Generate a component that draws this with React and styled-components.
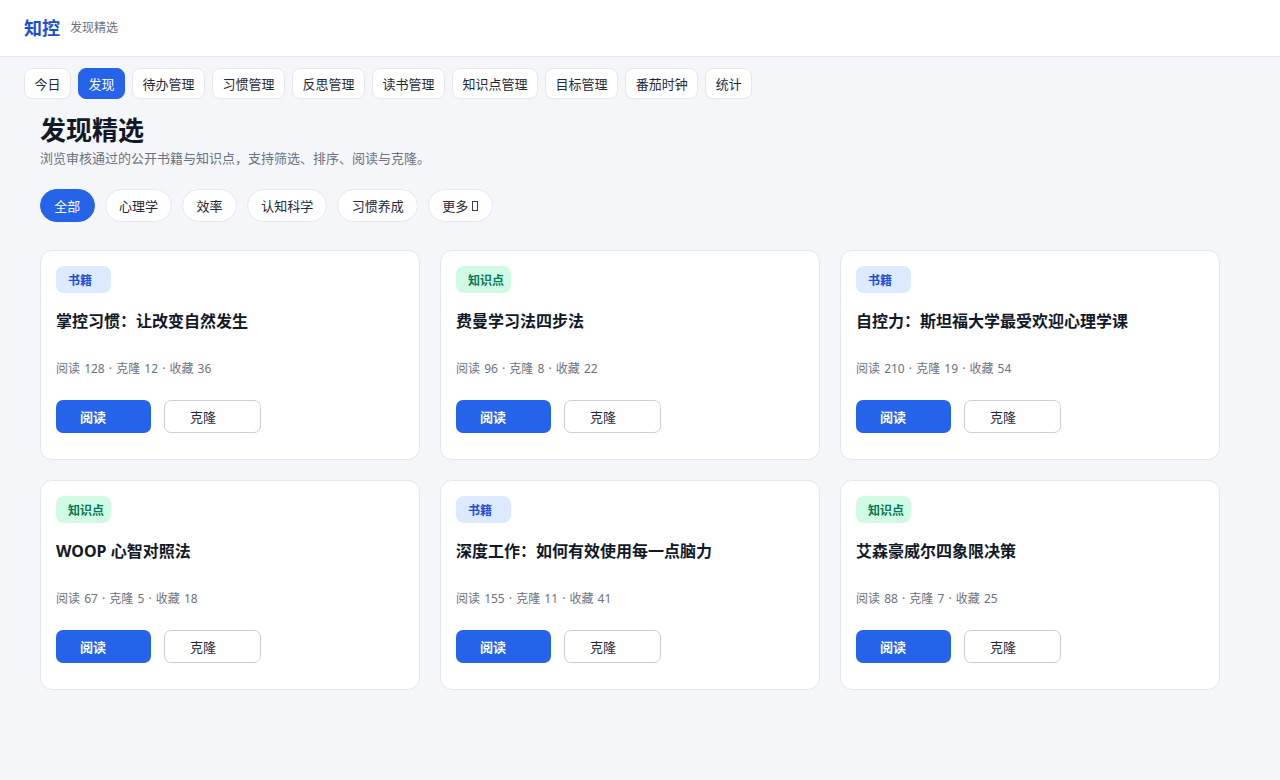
import React from "react";
import styled, { createGlobalStyle } from "styled-components";

const Global = createGlobalStyle`
  * { box-sizing: border-box; }
  body {
    margin: 0;
    background: #f5f6fa;
    font-family: "Noto Sans", "Noto Sans CJK SC", sans-serif;
    color: #111827;
  }
`;

const tabs = ["今日", "发现", "待办管理", "习惯管理", "反思管理", "读书管理", "知识点管理", "目标管理", "番茄时钟", "统计"];
const filters = ["全部", "心理学", "效率", "认知科学", "习惯养成"];

const items = [
  { kind: "book", title: "掌控习惯：让改变自然发生", read: 128, clone: 12, fav: 36 },
  { kind: "note", title: "费曼学习法四步法", read: 96, clone: 8, fav: 22 },
  { kind: "book", title: "自控力：斯坦福大学最受欢迎心理学课", read: 210, clone: 19, fav: 54 },
  { kind: "note", title: "WOOP 心智对照法", read: 67, clone: 5, fav: 18 },
  { kind: "book", title: "深度工作：如何有效使用每一点脑力", read: 155, clone: 11, fav: 41 },
  { kind: "note", title: "艾森豪威尔四象限决策", read: 88, clone: 7, fav: 25 },
];

const App = () => {
  return (
    <>
      <Global />
      <Header>
        <Logo>知控</Logo>
        <HeaderSub>发现精选</HeaderSub>
      </Header>
      <Nav>
        {tabs.map((t) => (
          <Tab key={t} active={t === "发现"}>{t}</Tab>
        ))}
      </Nav>
      <Main>
        <Title>发现精选</Title>
        <Subtitle>浏览审核通过的公开书籍与知识点，支持筛选、排序、阅读与克隆。</Subtitle>
        <Filters>
          {filters.map((f) => (
            <Pill key={f} active={f === "全部"}>{f}</Pill>
          ))}
          <Pill>
            更多 <Box />
          </Pill>
        </Filters>
        <Grid>
          {items.map((it) => (
            <Card key={it.title}>
              <Badge kind={it.kind}>{it.kind === "book" ? "书籍" : "知识点"}</Badge>
              <CardTitle>{it.title}</CardTitle>
              <Meta>
                阅读 {it.read} · 克隆 {it.clone} · 收藏 {it.fav}
              </Meta>
              <Actions>
                <ReadButton>阅读</ReadButton>
                <CloneButton>克隆</CloneButton>
              </Actions>
            </Card>
          ))}
        </Grid>
      </Main>
    </>
  );
};

const Header = styled.header`
  height: 57px;
  background: #fff;
  border-bottom: 1px solid #e3e6ec;
  display: flex;
  align-items: center;
  padding: 0 24px 2px;
  gap: 10px;
`;

const Logo = styled.div`
  color: #1d4ed8;
  font-size: 18px;
  font-weight: 700;
`;

const HeaderSub = styled.div`
  color: #6b7280;
  font-size: 12px;
`;

const Nav = styled.nav`
  display: flex;
  gap: 7px;
  padding: 11px 24px 0;
`;

const Tab = styled.div`
  height: 31px;
  padding: 0 9.5px;
  display: flex;
  align-items: center;
  font-size: 13px;
  border-radius: 8px;
  border: 1px solid ${(p) => (p.active ? "#2563eb" : "#e5e7eb")};
  background: ${(p) => (p.active ? "#2563eb" : "#fff")};
  color: ${(p) => (p.active ? "#fff" : "#1f2937")};
`;

const Main = styled.main`
  padding: 14px 60px 0 40px;
`;

const Title = styled.h1`
  margin: 0;
  font-size: 26px;
  line-height: 34px;
  font-weight: 700;
  color: #111827;
`;

const Subtitle = styled.p`
  margin: 2px 0 0;
  font-size: 13px;
  line-height: 18px;
  color: #6b7280;
`;

const Filters = styled.div`
  display: flex;
  gap: 10px;
  margin-top: 22px;
`;

const Pill = styled.div`
  height: 33px;
  padding: 0 13.3px;
  display: flex;
  align-items: center;
  gap: 4px;
  font-size: 13px;
  border-radius: 999px;
  border: 1px solid ${(p) => (p.active ? "#2563eb" : "#e5e7eb")};
  background: ${(p) => (p.active ? "#2563eb" : "#fff")};
  color: ${(p) => (p.active ? "#fff" : "#1f2937")};
`;

const Box = styled.span`
  display: inline-block;
  width: 6px;
  height: 10px;
  border: 1px solid #374151;
`;

const Grid = styled.div`
  display: grid;
  grid-template-columns: repeat(3, 380px);
  gap: 20px;
  margin-top: 28px;
`;

const Card = styled.div`
  height: 210px;
  background: #fff;
  border: 1px solid #e3e6ec;
  border-radius: 12px;
  padding: 15px;
  display: flex;
  flex-direction: column;
  align-items: flex-start;
`;

const Badge = styled.span`
  width: 55px;
  height: 27px;
  padding: 0 0 0 12px;
  display: flex;
  align-items: center;
  white-space: nowrap;
  border-radius: 8px;
  font-size: 12px;
  font-weight: 700;
  background: ${(p) => (p.kind === "book" ? "#dbeafe" : "#d1fae5")};
  color: ${(p) => (p.kind === "book" ? "#1d4ed8" : "#047857")};
`;

const CardTitle = styled.h3`
  margin: 17px 0 0;
  font-size: 16px;
  line-height: 22px;
  font-weight: 700;
  color: #111827;
`;

const Meta = styled.div`
  margin-top: 29px;
  font-size: 12px;
  line-height: 16px;
  word-spacing: 1px;
  color: #6b7280;
`;

const Actions = styled.div`
  display: flex;
  gap: 13px;
  margin-top: 23px;
`;

const ReadButton = styled.button`
  width: 95px;
  height: 33px;
  padding: 0 0 0 24px;
  text-align: left;
  border: none;
  border-radius: 7px;
  background: #2563eb;
  color: #fff;
  font-family: inherit;
  font-size: 13px;
  font-weight: 700;
`;

const CloneButton = styled.button`
  width: 97px;
  height: 33px;
  padding: 0 0 0 25px;
  text-align: left;
  border: 1px solid #cbd0d8;
  border-radius: 7px;
  background: #fff;
  color: #1f2937;
  font-family: inherit;
  font-size: 13px;
`;

export default App;
